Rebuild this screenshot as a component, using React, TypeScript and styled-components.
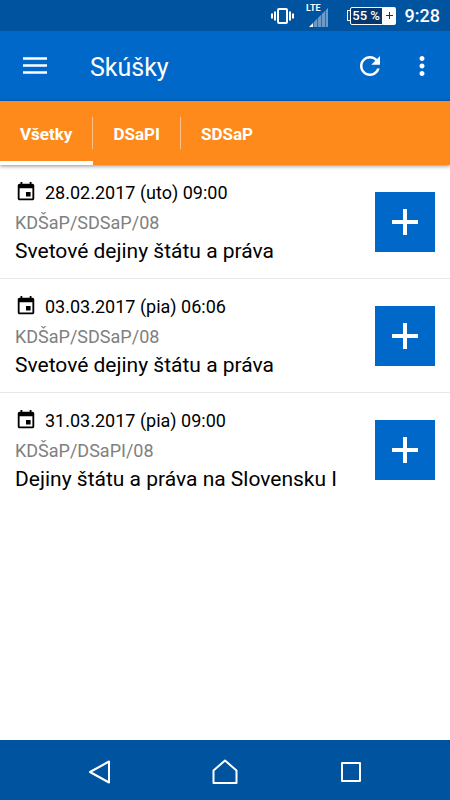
import React, { useState } from 'react';
import styled, { createGlobalStyle } from 'styled-components';

const GlobalStyle = createGlobalStyle`
  *, *::before, *::after { box-sizing: border-box; }
  body { margin: 0; background: #fff; font-family: Roboto, sans-serif; color: #000; }
  button { font: inherit; color: inherit; border: 0; padding: 0; margin: 0; background: none; cursor: pointer; }
  svg { display: block; flex: none; }
`;

const Screen = styled.div`
  min-height: 100vh;
  display: flex;
  flex-direction: column;
`;

const StatusBar = styled.div`
  height: 31px;
  padding: 0 10px;
  display: flex;
  align-items: center;
  justify-content: flex-end;
  background: #00539e;
  color: #fff;
`;

const Signal = styled.div`
  display: flex;
  align-items: flex-start;
  margin: 0 18px 0 12px;
`;

const NetworkType = styled.span`
  font-size: 9px;
  font-weight: 700;
  line-height: 9px;
  margin-right: -12px;
`;

const Battery = styled.div`
  display: flex;
  align-items: center;
`;

const BatteryTip = styled.span`
  width: 3px;
  height: 11px;
  border: 1px solid #fff;
  border-right: 0;
`;

const BatteryLevel = styled.span`
  height: 18px;
  width: 33px;
  border: 1px solid #fff;
  border-radius: 2px 0 0 2px;
  background: #06366b;
  font-size: 13px;
  font-weight: 500;
  line-height: 16px;
  text-align: center;
  white-space: nowrap;
`;

const BatteryCharge = styled.span`
  width: 13px;
  height: 18px;
  border-radius: 0 2px 2px 0;
  background: #fff;
  display: grid;
  place-items: center;
`;

const Clock = styled.time`
  font-size: 18px;
  font-weight: 500;
  line-height: 20px;
  margin-left: 9px;
`;

const AppBar = styled.header`
  height: 70px;
  padding: 0 13px 0 20px;
  display: flex;
  align-items: center;
  background: #0068c8;
  color: #fff;
`;

const Title = styled.h1`
  flex: 1;
  margin: 4px 0 0 40px;
  font-size: 25px;
  font-weight: 400;
  line-height: 32px;
`;

const IconButton = styled.button`
  height: 48px;
  display: grid;
  place-items: center;
  & + & { margin-left: 22px; }
`;

const Tabs = styled.div`
  height: 64px;
  display: flex;
  background: #ff8a1c;
  color: #fff;
  box-shadow: 0 1px 4px rgba(0, 0, 0, 0.45);
`;

const Tab = styled.button<{ $active: boolean }>`
  display: flex;
  align-items: center;
  border-bottom: 4px solid ${(p) => (p.$active ? '#fff' : 'transparent')};
`;

const TabLabel = styled.span<{ $divided: boolean }>`
  height: 32px;
  margin-top: 4px;
  padding: 2px 20px 0 20px;
  border-right: 1px solid ${(p) => (p.$divided ? '#ffc48c' : 'transparent')};
  font-size: 17px;
  font-weight: 700;
  line-height: 30px;
`;

const ExamList = styled.ul`
  flex: 1;
  list-style: none;
  margin: 0;
  padding: 0;
`;

const ExamRow = styled.li`
  display: flex;
  align-items: center;
  justify-content: space-between;
  padding: 14px 15px 13px;
  border-bottom: 1px solid #e8e8e8;
  &:last-child { border-bottom: 0; }
`;

const ExamDate = styled.div`
  display: flex;
  align-items: center;
  gap: 8px;
  font-size: 18px;
  line-height: 28px;
  svg { margin-bottom: 2px; }
`;

const ExamCode = styled.div`
  font-size: 18px;
  line-height: 32px;
  color: #808080;
`;

const ExamName = styled.div`
  font-size: 21px;
  line-height: 24px;
  padding-bottom: 2px;
`;

const AddButton = styled.button`
  flex: none;
  width: 60px;
  height: 60px;
  display: grid;
  place-items: center;
  background: #0068c8;
  color: #fff;
`;

const NavBar = styled.nav`
  height: 60px;
  padding: 4px 37px 0;
  display: flex;
  justify-content: space-between;
  align-items: center;
  background: #00539e;
  color: #fff;
`;

const NavButton = styled.button`
  width: 125px;
  height: 48px;
  display: grid;
  place-items: center;
`;

const CalendarIcon = () => (
  <svg width="22" height="22" viewBox="0 0 24 24" fill="currentColor" aria-hidden="true">
    <path d="M17 12h-5v5h5v-5zM16 1v2H8V1H6v2H5c-1.11 0-1.99.9-1.99 2L3 19c0 1.1.89 2 2 2h14c1.1 0 2-.9 2-2V5c0-1.1-.9-2-2-2h-1V1h-2zm3 18H5V8h14v11z" />
  </svg>
);

const tabs = ['Všetky', 'DSaPI', 'SDSaP'];

const exams = [
  { date: '28.02.2017 (uto) 09:00', code: 'KDŠaP/SDSaP/08', name: 'Svetové dejiny štátu a práva' },
  { date: '03.03.2017 (pia) 06:06', code: 'KDŠaP/SDSaP/08', name: 'Svetové dejiny štátu a práva' },
  { date: '31.03.2017 (pia) 09:00', code: 'KDŠaP/DSaPI/08', name: 'Dejiny štátu a práva na Slovensku I' },
];

export default function App() {
  const [active, setActive] = useState('Všetky');
  const visible = exams.filter((e) => active === 'Všetky' || e.code.split('/')[1] === active);

  return (
    <Screen>
      <GlobalStyle />
      <StatusBar>
        <svg width="23" height="18" viewBox="0 0 23 18" fill="none" stroke="currentColor" aria-hidden="true">
          <rect x="7" y="2" width="9" height="14" rx="1" strokeWidth="2" />
          <path d="M4 4.500v9M19 4.500v9" strokeWidth="2" />
          <path d="M1 6.500v5M22 6.500v5" strokeWidth="2" />
        </svg>
        <Signal>
          <NetworkType>LTE</NetworkType>
          <svg width="20" height="24" viewBox="0 0 20 24" aria-hidden="true">
            <path d="M0 23 4 19v4z" fill="#fff" />
            <path d="M5 18 8 15v8H5zM9 14l3-3v12H9zM13 10l3-3v16h-3zM17 6l2-2v19h-2z" fill="#6c9ccb" />
            <path d="M4 19 19 4v19H4z" fill="#6c9ccb" fillOpacity=".4" />
          </svg>
        </Signal>
        <Battery>
          <BatteryTip />
          <BatteryLevel>55 %</BatteryLevel>
          <BatteryCharge>
            <svg width="9" height="9" viewBox="0 0 9 9" stroke="#06366b" strokeWidth="1" aria-hidden="true">
              <path d="M1 4.500h7M4.500 1v7" />
            </svg>
          </BatteryCharge>
        </Battery>
        <Clock>9:28</Clock>
      </StatusBar>

      <AppBar>
        <IconButton aria-label="Menu">
          <svg width="30" height="30" viewBox="0 0 30 30" fill="currentColor" aria-hidden="true">
            <path d="M3 6.300h24v2.500H3zM3 13.300h24v2.500H3zM3 20.300h24v2.500H3z" />
          </svg>
        </IconButton>
        <Title>Skúšky</Title>
        <IconButton aria-label="Obnoviť">
          <svg width="30" height="30" viewBox="0 0 24 24" fill="currentColor" aria-hidden="true">
            <path d="M17.65 6.35C16.2 4.9 14.21 4 12 4c-4.42 0-7.99 3.58-7.99 8s3.57 8 7.99 8c3.73 0 6.84-2.55 7.73-6h-2.08c-.82 2.33-3.04 4-5.65 4-3.31 0-6-2.69-6-6s2.69-6 6-6c1.66 0 3.14.69 4.22 1.78L13 11h7V4l-2.35 2.35z" />
          </svg>
        </IconButton>
        <IconButton aria-label="Ďalšie možnosti">
          <svg width="30" height="30" viewBox="0 0 24 24" fill="currentColor" aria-hidden="true">
            <path d="M12 8c1.1 0 2-.9 2-2s-.9-2-2-2-2 .9-2 2 .9 2 2 2zm0 2c-1.1 0-2 .9-2 2s.9 2 2 2 2-.9 2-2-.9-2-2-2zm0 6c-1.1 0-2 .9-2 2s.9 2 2 2 2-.9 2-2-.9-2-2-2z" />
          </svg>
        </IconButton>
      </AppBar>

      <Tabs role="tablist">
        {tabs.map((tab, i) => (
          <Tab key={tab} role="tab" aria-selected={tab === active} $active={tab === active} onClick={() => setActive(tab)}>
            <TabLabel $divided={i < tabs.length - 1}>{tab}</TabLabel>
          </Tab>
        ))}
      </Tabs>

      <ExamList>
        {visible.map((exam) => (
          <ExamRow key={exam.date}>
            <div>
              <ExamDate>
                <CalendarIcon />
                {exam.date}
              </ExamDate>
              <ExamCode>{exam.code}</ExamCode>
              <ExamName>{exam.name}</ExamName>
            </div>
            <AddButton aria-label={`Pridať ${exam.name}`}>
              <svg width="28" height="28" viewBox="0 0 28 28" fill="currentColor" aria-hidden="true">
                <path d="M12 1h4v11h11v4H16v11h-4V16H1v-4h11z" />
              </svg>
            </AddButton>
          </ExamRow>
        ))}
      </ExamList>

      <NavBar>
        <NavButton aria-label="Späť">
          <svg width="26" height="26" viewBox="0 0 26 26" fill="none" stroke="currentColor" strokeWidth="2" strokeLinejoin="round" aria-hidden="true">
            <path d="M22 2.500V23.500L3 13z" />
          </svg>
        </NavButton>
        <NavButton aria-label="Domov">
          <svg width="26" height="26" viewBox="0 0 26 26" fill="none" stroke="currentColor" strokeWidth="2" strokeLinejoin="round" aria-hidden="true">
            <path d="M13 1.500 24.500 11.500V24H1.500V11.500z" />
          </svg>
        </NavButton>
        <NavButton aria-label="Posledné aplikácie">
          <svg width="26" height="26" viewBox="0 0 26 26" fill="none" stroke="currentColor" strokeWidth="2" strokeLinejoin="round" aria-hidden="true">
            <path d="M4 4h18v18H4z" />
          </svg>
        </NavButton>
      </NavBar>
    </Screen>
  );
}
